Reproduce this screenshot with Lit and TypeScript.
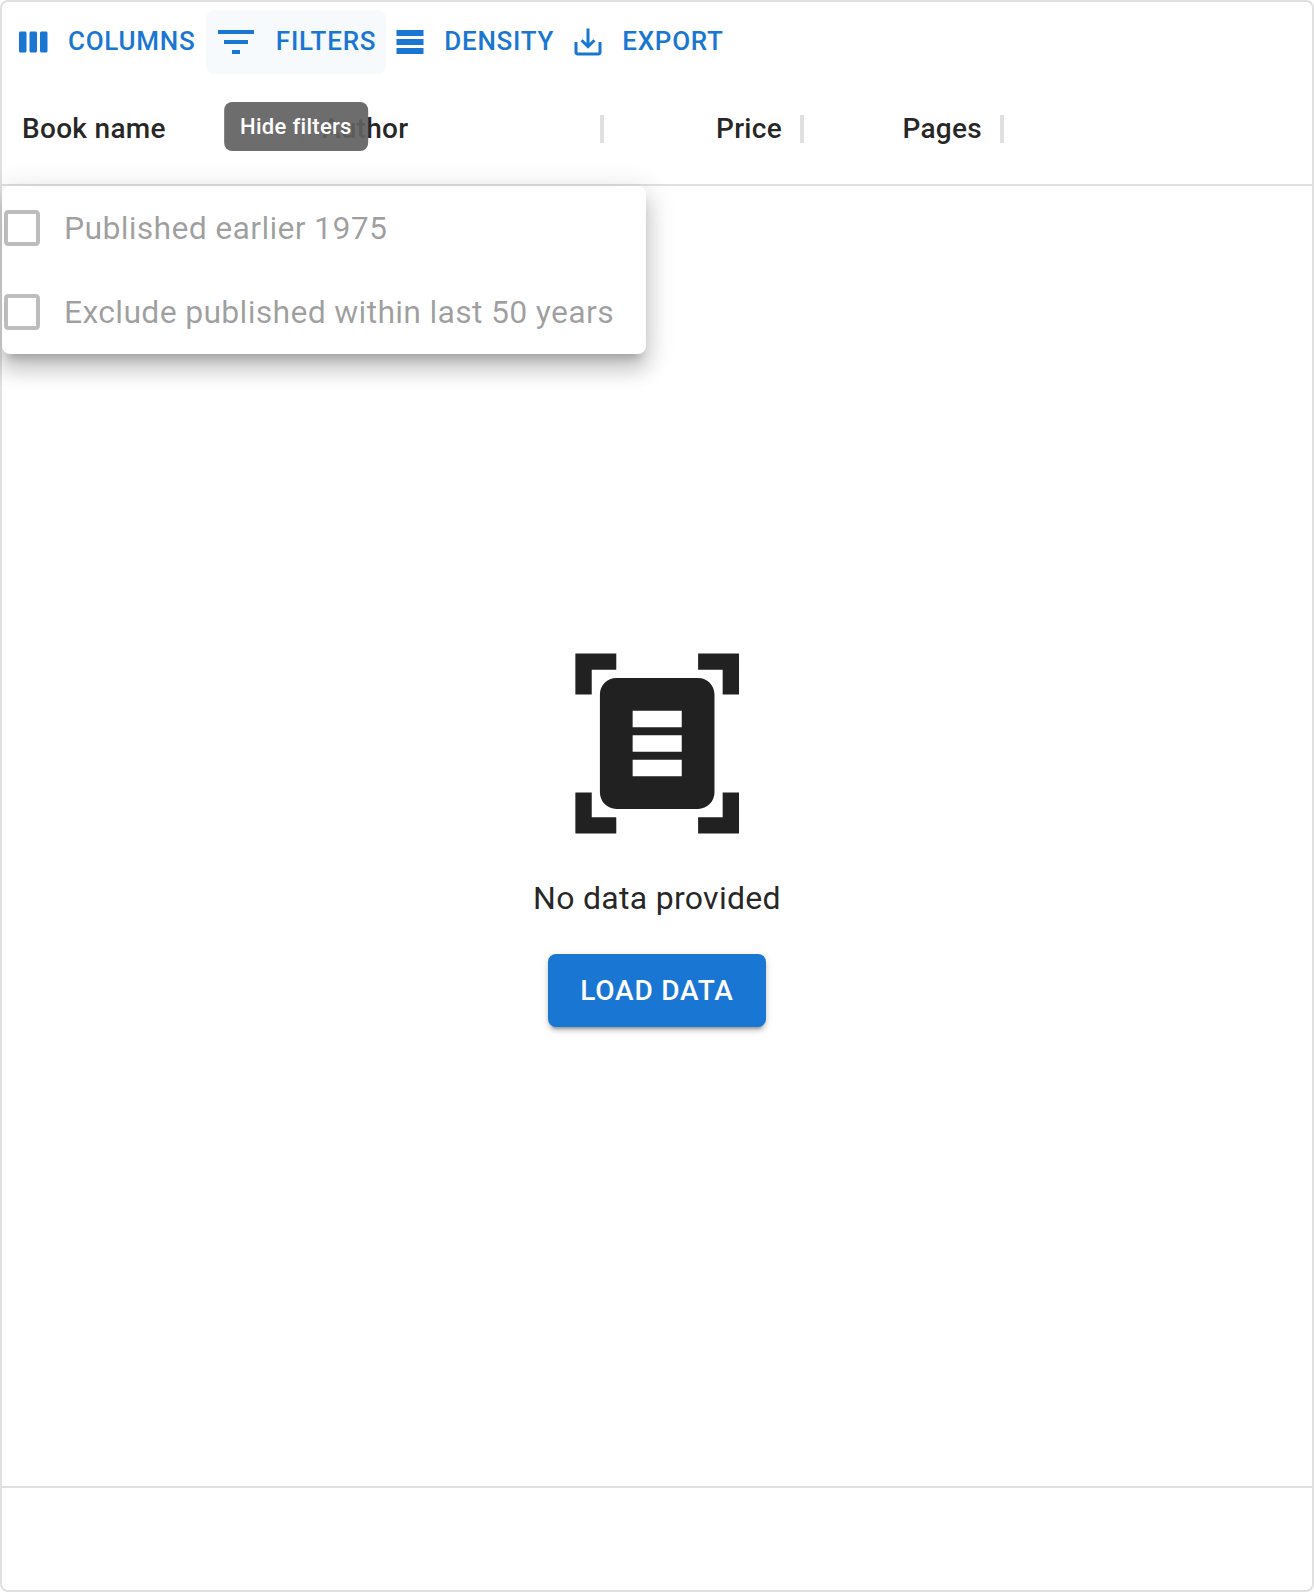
import { LitElement, html, css, svg } from "lit";
import { customElement } from "lit/decorators.js";
import { classMap } from "lit/directives/class-map.js";

const ICONS = {
  columns:
    "M6 5H3c-.55 0-1 .45-1 1v12c0 .55.45 1 1 1h3c.55 0 1-.45 1-1V6c0-.55-.45-1-1-1zm14 0h-3c-.55 0-1 .45-1 1v12c0 .55.45 1 1 1h3c.55 0 1-.45 1-1V6c0-.55-.45-1-1-1zm-7 0h-3c-.55 0-1 .45-1 1v12c0 .55.45 1 1 1h3c.55 0 1-.45 1-1V6c0-.55-.45-1-1-1z",
  filters: "M10 18h4v-2h-4v2zM3 6v2h18V6H3zm3 7h12v-2H6v2z",
  density: "M21 8H3V4h18v4zm0 2H3v4h18v-4zm0 6H3v4h18v-4z",
  export:
    "M19 12v7H5v-7H3v7c0 1.1.9 2 2 2h14c1.1 0 2-.9 2-2v-7h-2zm-6 .67l2.59-2.58L17 11.5l-5 5-5-5 1.41-1.41L11 12.67V3h2z",
  checkbox:
    "M19 5v14H5V5h14m0-2H5c-1.1 0-2 .9-2 2v14c0 1.1.9 2 2 2h14c1.1 0 2-.9 2-2V5c0-1.1-.9-2-2-2z",
  scanner:
    "M7 3H4v3H2V1h5v2zm15 3V1h-5v2h3v3h2zM7 21H4v-3H2v5h5v-2zm13-3v3h-3v2h5v-5h-2zm-1 0c0 1.1-.9 2-2 2H7c-1.1 0-2-.9-2-2V6c0-1.1.9-2 2-2h10c1.1 0 2 .9 2 2v12zM15 8H9v2h6V8zm0 3H9v2h6v-2zm0 3H9v2h6v-2z",
  separator: "M11 19V5h2v14z",
};

const icon = (name: keyof typeof ICONS, cls: string) => html`
  <svg class=${cls} viewBox="0 0 24 24" aria-hidden="true">${svg`<path d=${ICONS[name]}></path>`}</svg>
`;

const ACTIONS = [
  { icon: "columns", label: "Columns" },
  { icon: "filters", label: "Filters", tooltip: "Hide filters" },
  { icon: "density", label: "Density" },
  { icon: "export", label: "Export" },
] as const;

const COLUMNS = [
  { title: "Book name", wide: true },
  { title: "Author", wide: true },
  { title: "Price", wide: false },
  { title: "Pages", wide: false },
];

const FILTERS = ["Published earlier 1975", "Exclude published within last 50 years"];

@customElement("app-root")
export class AppRoot extends LitElement {
  static styles = css`
    :host {
      display: block;
      height: 1592px;
      font-family: Roboto, "Liberation Sans", sans-serif;
      color: rgba(0, 0, 0, 0.87);
      background: #fff;
      -webkit-font-smoothing: antialiased;
    }
    * {
      box-sizing: border-box;
    }
    svg {
      display: block;
      flex: none;
      fill: currentColor;
    }
    button {
      border: 0;
      margin: 0;
      font-family: inherit;
      font-weight: 500;
      line-height: 1.75;
      letter-spacing: 0.02857em;
      text-transform: uppercase;
      border-radius: 8px;
    }
    .grid {
      height: 100%;
      display: flex;
      flex-direction: column;
      border: 2px solid #e0e0e0;
      border-radius: 8px;
    }
    .toolbar {
      display: flex;
      padding: 8px 8px 0;
    }
    .slot {
      position: relative;
      display: flex;
    }
    .action {
      display: flex;
      align-items: center;
      height: 64px;
      padding: 8px 10px;
      background: transparent;
      color: #1976d2;
      font-size: 26px;
    }
    .action.hovered {
      background: rgba(25, 118, 210, 0.04);
    }
    .action-icon {
      width: 36px;
      height: 36px;
      margin: 0 16px 0 -4px;
    }
    .hovered .action-icon {
      width: 48px;
      height: 48px;
      margin-right: 16.3px;
    }
    .tooltip {
      position: absolute;
      z-index: 3;
      top: 92px;
      left: 50%;
      transform: translateX(-50%);
      padding: 8px 16px;
      border-radius: 8px;
      background: rgba(97, 97, 97, 0.92);
      color: #fff;
      font-size: 22px;
      font-weight: 500;
      line-height: 33px;
      letter-spacing: 0.3px;
      white-space: nowrap;
    }
    .headers {
      display: flex;
      height: 112px;
      flex: none;
      border-bottom: 2px solid #e0e0e0;
    }
    .header {
      position: relative;
      display: flex;
      align-items: center;
      justify-content: flex-end;
      width: 200px;
      padding: 0 20px;
      font-size: 28px;
      font-weight: 500;
      letter-spacing: 0.01071em;
    }
    .header.wide {
      width: 300px;
      justify-content: flex-start;
    }
    .title {
      padding-bottom: 2px;
    }
    .separator {
      position: absolute;
      right: -24px;
      width: 48px;
      height: 48px;
      color: #e0e0e0;
    }
    .body {
      position: relative;
      flex: 1;
      display: flex;
      flex-direction: column;
      align-items: center;
      justify-content: center;
      gap: 32px;
    }
    .panel {
      position: absolute;
      z-index: 2;
      top: 0;
      left: 0;
      border-radius: 8px;
      background: #fff;
      box-shadow: 0 10px 10px -6px rgba(0, 0, 0, 0.2), 0 16px 20px 2px rgba(0, 0, 0, 0.14),
        0 6px 28px 4px rgba(0, 0, 0, 0.12);
    }
    .option {
      display: flex;
      align-items: center;
      height: 84px;
      margin: 0 32px 0 -22px;
      color: rgba(0, 0, 0, 0.38);
      white-space: nowrap;
    }
    .option,
    .message {
      font-size: 32px;
      line-height: 48px;
      letter-spacing: 0.00938em;
    }
    .option {
      letter-spacing: 0.285px;
    }
    .checkbox {
      width: 48px;
      height: 48px;
      margin: 18px;
      color: rgba(0, 0, 0, 0.26);
    }
    .scanner {
      width: 196.4px;
      height: 197px;
    }
    .load {
      padding: 12px 32px;
      background: #1976d2;
      color: #fff;
      font-size: 28px;
      box-shadow: 0 6px 2px -4px rgba(0, 0, 0, 0.2), 0 4px 4px 0 rgba(0, 0, 0, 0.14),
        0 2px 10px 0 rgba(0, 0, 0, 0.12);
    }
    .footer {
      flex: none;
      height: 104px;
      border-top: 2px solid #e0e0e0;
    }
  `;

  render() {
    return html`
      <div class="grid">
        <div class="toolbar">
          ${ACTIONS.map(
            (a) => html`
              <div class="slot">
                <button class=${classMap({ action: true, hovered: "tooltip" in a })}>
                  ${icon(a.icon, "action-icon")}${a.label}
                </button>
                ${"tooltip" in a ? html`<div class="tooltip">${a.tooltip}</div>` : ""}
              </div>
            `
          )}
        </div>
        <div class="headers">
          ${COLUMNS.map(
            (c) => html`
              <div class=${classMap({ header: true, wide: c.wide })}>
                <span class="title">${c.title}</span>${icon("separator", "separator")}
              </div>
            `
          )}
        </div>
        <div class="body">
          <div class="panel">
            ${FILTERS.map((f) => html`<label class="option">${icon("checkbox", "checkbox")}<span>${f}</span></label>`)}
          </div>
          ${icon("scanner", "scanner")}
          <div class="message">No data provided</div>
          <button class="load">Load data</button>
        </div>
        <div class="footer"></div>
      </div>
    `;
  }
}
